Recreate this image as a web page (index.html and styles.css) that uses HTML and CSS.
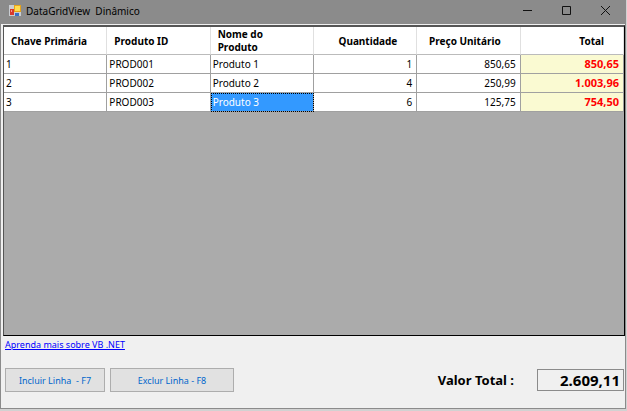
FILE: index.html
```html
<!DOCTYPE html>
<html lang="pt-BR">
<head>
    <meta charset="UTF-8">
    <meta name="viewport" content="width=device-width, initial-scale=1.0">
    <title>DataGridView Dinâmico</title>
    <link rel="stylesheet" href="styles.css">
</head>
<body>
    <div class="window">
        <header class="title-bar">
            <svg class="app-icon" width="13" height="13" viewBox="0 0 13 13" aria-hidden="true">
                <rect x="0" y="1" width="12" height="11" fill="#c9cdd2"/>
                <rect x="1" y="5" width="4" height="6" fill="#d8392b"/>
                <rect x="2" y="6" width="1" height="2" fill="#f29a8e"/>
                <rect x="5" y="1" width="7" height="7" fill="#e8a317"/>
                <rect x="6" y="2" width="5" height="5" fill="#ffdc4f"/>
                <rect x="6" y="9" width="4" height="3" fill="#3b6fc4"/>
            </svg>
            <span class="title">DataGridView&nbsp; Dinâmico</span>
            <div class="window-buttons">
                <button type="button" aria-label="Minimizar">
                    <svg width="9" height="9" viewBox="0 0 9 9"><path d="M0 4.5h9"/></svg>
                </button>
                <button type="button" aria-label="Maximizar">
                    <svg width="9" height="9" viewBox="0 0 9 9"><path d="M.5 .5h8v8h-8z"/></svg>
                </button>
                <button type="button" aria-label="Fechar">
                    <svg width="9" height="9" viewBox="0 0 9 9"><path d="M0 0l9 9M9 0l-9 9"/></svg>
                </button>
            </div>
        </header>

        <main class="grid">
            <table>
                <thead>
                    <tr>
                        <th>Chave Primária</th>
                        <th>Produto ID</th>
                        <th>Nome do<br>Produto</th>
                        <th class="number">Quantidade</th>
                        <th class="number">Preço Unitário</th>
                        <th class="number">Total</th>
                    </tr>
                </thead>
                <tbody>
                    <tr>
                        <td>1</td>
                        <td>PROD001</td>
                        <td>Produto 1</td>
                        <td class="number">1</td>
                        <td class="number">850,65</td>
                        <td class="number total">850,65</td>
                    </tr>
                    <tr>
                        <td>2</td>
                        <td>PROD002</td>
                        <td>Produto 2</td>
                        <td class="number">4</td>
                        <td class="number">250,99</td>
                        <td class="number total">1.003,96</td>
                    </tr>
                    <tr>
                        <td>3</td>
                        <td>PROD003</td>
                        <td class="selected">Produto 3</td>
                        <td class="number">6</td>
                        <td class="number">125,75</td>
                        <td class="number total">754,50</td>
                    </tr>
                </tbody>
            </table>
        </main>

        <footer class="footer">
            <a class="more" href="#">Aprenda mais sobre VB .NET</a>
            <div class="actions">
                <button type="button" class="btn">Incluir Linha&nbsp; - F7</button>
                <button type="button" class="btn btn-wide">Exclur Linha - F8</button>
                <label class="total-label" for="valor-total">Valor Total :</label>
                <input class="total-value" id="valor-total" type="text" value="2.609,11" readonly>
            </div>
        </footer>
    </div>
</body>
</html>
```

FILE: styles.css
```css
* {
    box-sizing: border-box;
}

body {
    margin: 0;
    height: 100vh;
    padding: 0 1px 2px 0;
    background-color: #d2d2d2;
    font-family: "Noto Sans", "Open Sans", sans-serif;
    font-size: 10px;
    color: #000;
}

.window {
    display: flex;
    flex-direction: column;
    height: 100%;
    background-color: #f0f0f0;
    border: 1px solid #8b8b8b;
    border-top: 0;
}

/* title bar */
.title-bar {
    display: flex;
    align-items: center;
    height: 24px;
    padding: 0 6px 3px 8px;
    background-color: #8b8b8b;
}

.title {
    margin-left: 4px;
}

.window-buttons {
    display: flex;
    margin-left: auto;
    gap: 12px;
}

.window-buttons button {
    display: flex;
    align-items: center;
    justify-content: center;
    width: 27px;
    height: 20px;
    padding: 0;
    border: 0;
    background: transparent;
}

.window-buttons path {
    fill: none;
    stroke: #111;
    stroke-width: 1;
}

/* data grid */
.grid {
    flex: 1;
    margin: 1px 0 0 2px;
    background-color: #ababab;
    border: 1px solid #000;
    border-top: 2px solid #555;
    border-left-color: #555;
}

table {
    width: 100%;
    table-layout: fixed;
    border-collapse: separate;
    border-spacing: 0;
}

th {
    height: 28px;
    padding: 1px 6px 0 7px;
    background-color: #fff;
    border-right: 1px solid #e0e0e0;
    border-bottom: 1px solid #bbb;
    line-height: 13px;
    text-align: left;
    white-space: nowrap;
}

th.number {
    padding-right: 19px;
}

td {
    height: 19px;
    padding: 0 4px 0 2px;
    background-color: #fff;
    border-right: 1px solid #a0a0a0;
    border-bottom: 1px solid #a0a0a0;
    line-height: 14px;
}

.number {
    text-align: right;
}

td.total {
    background-color: #fafad2;
    color: #f00;
    font-size: 11px;
    font-weight: bold;
}

td.selected {
    background-color: #3399ff;
    color: #fff;
    outline: 1px dotted #000;
    outline-offset: -1px;
}

/* footer */
.footer {
    padding: 2px 1px 16px 4px;
}

.more {
    display: block;
    width: max-content;
    line-height: 14px;
    color: #00f;
    font-size: 9px;
}

.actions {
    display: flex;
    align-items: center;
    gap: 5px;
    margin-top: 16px;
}

.btn {
    width: 100px;
    height: 24px;
    padding: 0;
    background-color: #e1e1e1;
    border: 1px solid #adadad;
    color: #0066cc;
    font-family: inherit;
    font-size: 9px;
}

.btn-wide {
    width: 124px;
}

.total-label {
    margin-left: auto;
    font-size: 13px;
    font-weight: bold;
}

.total-value {
    width: 87px;
    height: 22px;
    margin-left: 18px;
    padding: 0 3px;
    background-color: #f0f0f0;
    border: 1px solid #8b8b8b;
    font-family: inherit;
    font-size: 15px;
    font-weight: bold;
    text-align: right;
}
```
